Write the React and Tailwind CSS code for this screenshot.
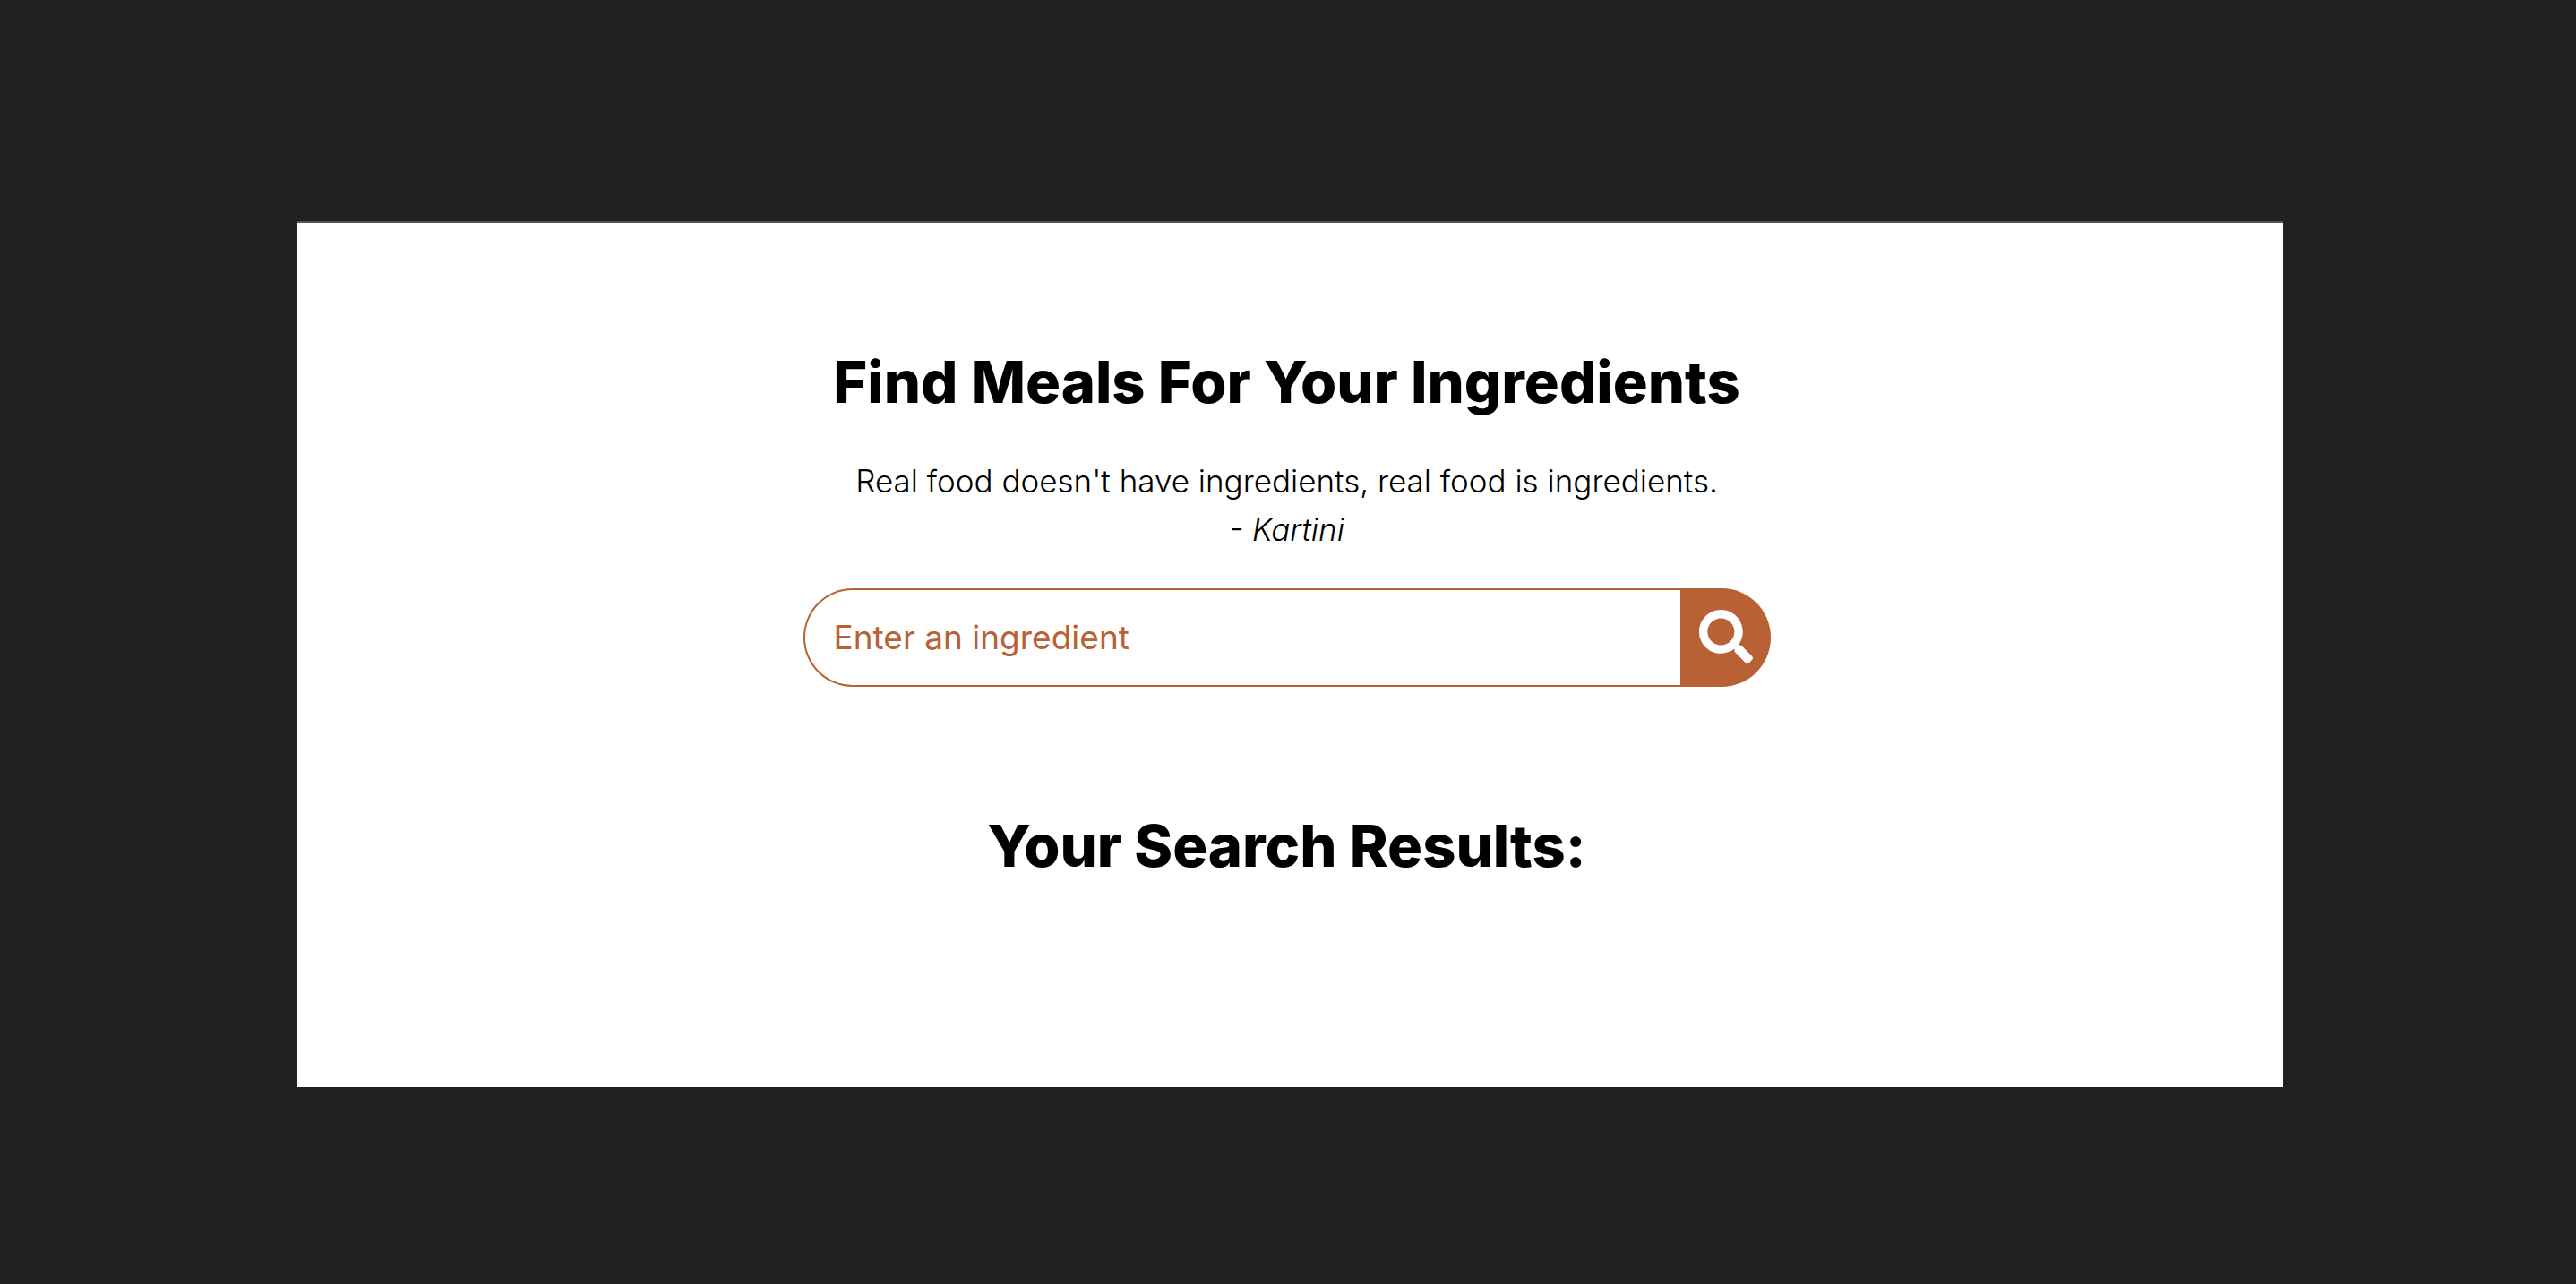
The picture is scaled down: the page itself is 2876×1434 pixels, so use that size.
import { FaSearch } from "react-icons/fa";

export default function App() {
  return (
    <div className="flex min-h-screen flex-col bg-[#202122] pt-[247px] pr-[327px] pb-[220px] pl-[332px] font-['Inter',sans-serif] text-black">
      <main className="flex grow flex-col items-center border-t-2 border-[#555555] bg-white pt-[138px] pr-[8px] text-center">
        <h1 className="text-[65px] leading-[80px] font-extrabold">Find Meals For Your Ingredients</h1>
        <blockquote className="mt-[43px] text-[35px] leading-[54px] font-light">
          <p>Real food doesn't have ingredients, real food is ingredients.</p>
          <cite className="block">- Kartini</cite>
        </blockquote>
        <form className="mt-[39px] flex h-[110px] w-full max-w-[1080px]" onSubmit={(e) => e.preventDefault()}>
          <input
            type="text"
            aria-label="Ingredient"
            placeholder="Enter an ingredient"
            className="min-w-0 grow rounded-l-full border-2 border-r-0 border-[#b86135] bg-white pl-[32px] text-[37px] text-[#b86135] outline-none placeholder:text-[#b86135]"
          />
          <button
            type="submit"
            aria-label="Search"
            className="flex w-[101px] shrink-0 items-center justify-center rounded-r-full bg-[#b86135] pb-[3px] pl-[2px] text-white"
          >
            <FaSearch className="size-[60px]" />
          </button>
        </form>
        <h2 className="mt-[138px] text-[65px] leading-[80px] font-extrabold">Your Search Results:</h2>
      </main>
    </div>
  );
}
